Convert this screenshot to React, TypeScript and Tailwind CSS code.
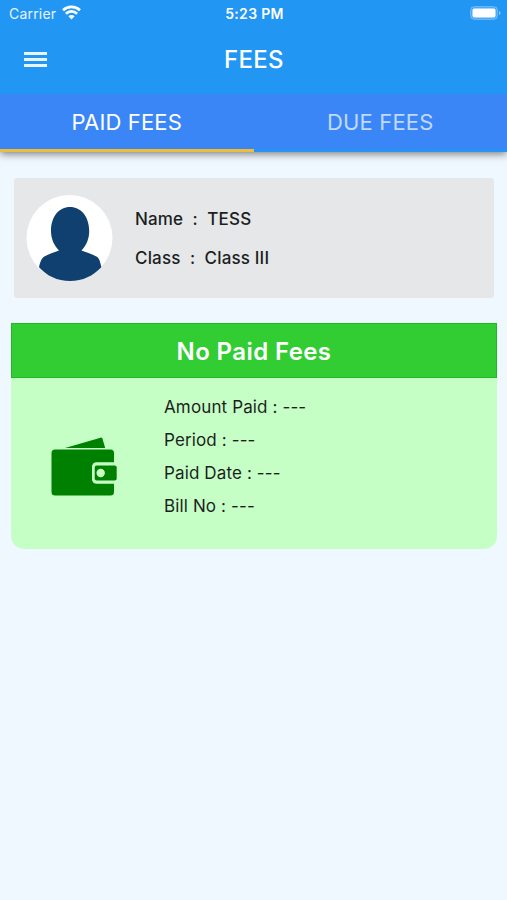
const details = ['Amount Paid : ---', 'Period : ---', 'Paid Date : ---', 'Bill No : ---'];

function StatusBar() {
  return (
    <div className="grid h-7 grid-cols-3 items-center pl-[9px] pr-[6px] text-sm leading-7">
      <div className="flex items-center gap-[6px]">
        <span className="tracking-[0.2px] text-white/90">Carrier</span>
        <svg className="mb-[3px]" width="19" height="15" viewBox="0 0 19 15" fill="none" stroke="white" strokeWidth="2.7">
          <path d="M1 5.3C5.8.8 13.2.8 18 5.3" />
          <path d="M3.9 8.7c3.2-3 8-3 11.2 0" />
          <path d="M6.4 11.2 9.5 14.5l3.1-3.3c-1.7-1.6-4.5-1.6-6.2 0Z" fill="white" stroke="none" />
        </svg>
      </div>
      <span className="-ml-px whitespace-nowrap text-center text-[14px] font-semibold tracking-[0.3px]">5:23 PM</span>
      <svg className="mb-0.5 justify-self-end" width="31" height="14" viewBox="0 0 31 14">
        <rect x=".5" y=".5" width="27" height="13" rx="4" fill="white" fillOpacity=".2" stroke="white" strokeOpacity=".25" />
        <rect x="2.5" y="2.5" width="23" height="9" rx="2" fill="white" />
        <path d="M29 5c2 .7 2 3.3 0 4Z" fill="white" fillOpacity=".5" />
      </svg>
    </div>
  );
}

function Avatar() {
  return (
    <svg className="shrink-0" width="87" height="86" viewBox="0 0 87 86">
      <circle cx="43.5" cy="43" r="43" fill="white" />
      <path
        fill="#10406f"
        d="M44 12C33 12 25 21.5 25 36c0 8 3.2 14.5 8 19.5-5 2-12.5 4.2-16 7-2 2-3.2 5.8-4 9.8C21 81 31 86 44 86s23-5 31.3-13.7c-.8-4-1.5-7.8-3.5-9.8-3.5-2.8-11.3-5-16.3-7 4.700-5 7.700-11.500 7.700-19.500C63.200 21.500 55 12 44 12Z"
      />
    </svg>
  );
}

function Wallet() {
  return (
    <svg className="shrink-0" width="66" height="60" viewBox="0 0 66 60">
      <path d="M14 11 49.5.7q1.5-.4 2 1L54.200 11Z" fill="#008000" />
      <rect x=".5" y="12.5" width="62.5" height="46" rx="3.5" fill="#008000" />
      <path d="M66 25.200H45.500a4.500 4.500 0 0 0-4.500 4.500v12.600a4.500 4.500 0 0 0 4.500 4.500H66Z" fill="#c6ffc6" />
      <rect x="43.7" y="28.5" width="22" height="15" rx="2" fill="#008000" />
      <circle cx="49.7" cy="36" r="4.2" fill="#c6ffc6" />
    </svg>
  );
}

export default function App() {
  return (
    <div className="min-h-[900px] bg-[#f0f8ff] font-['Inter','Liberation_Sans',sans-serif] text-[#1c1f22]">
      <header className="bg-[#2196f3] text-white shadow-[0_2px_8px_rgba(0,0,0,0.5)]">
        <StatusBar />
        <div className="grid h-[66px] grid-cols-[1fr_auto_1fr] items-center px-6 pb-[3px]">
          <button className="flex h-[15px] w-[22.5px] flex-col justify-between" aria-label="Menu">
            <span className="h-[3px] w-full bg-white/90" />
            <span className="h-[3px] w-full bg-white/90" />
            <span className="h-[3px] w-full bg-white/90" />
          </button>
          <h1 className="pl-px pt-px text-[24px] font-[450] leading-8 tracking-[0.3px]">FEES</h1>
        </div>
        <nav className="grid h-[58px] grid-cols-2 grid-rows-[58px] text-center text-[22px] leading-[57px] tracking-[0.15px]">
          <div className="border-b-[3px] border-[#edbd3a] bg-[#3b86f6]">PAID FEES</div>
          <div className="border-b-[3px] border-[#2993f3] bg-[#3b86f6] text-white/70">DUE FEES</div>
        </nav>
      </header>

      <main className="pt-[26px] [font-feature-settings:'calt'_0]">
        <section className="ml-[14px] mr-[13px] flex h-[120px] items-center gap-[23px] rounded-[3px] bg-[#e6e7e9] pl-3 text-[17px] font-medium tracking-[0.16px]">
          <Avatar />
          <div className="-ml-px pt-px leading-[39px]">
            <p className="whitespace-pre">Name  :  TESS</p>
            <p className="whitespace-pre">Class  :  Class III</p>
          </div>
        </section>

        <section className="ml-[11px] mr-[10px] mt-[25px] overflow-hidden rounded-b-[13px] bg-[#c6ffc6]">
          <h2 className="h-[55px] border border-[#22b82a] bg-[#32cd32] text-center text-[24px] font-semibold leading-[55px] tracking-[0.4px] text-white">
            No Paid Fees
          </h2>
          <div className="flex h-[171px] gap-[47px] pl-10">
            <div className="pt-[59px]"><Wallet /></div>
            <div className="pt-[13px] text-[17px] leading-[33px] tracking-[0.13px]">
              {details.map((line) => <p key={line}>{line}</p>)}
            </div>
          </div>
        </section>
      </main>
    </div>
  );
}
